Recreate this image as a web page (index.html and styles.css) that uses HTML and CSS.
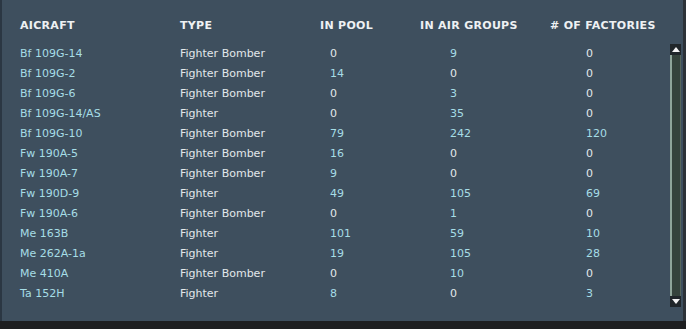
FILE: index.html
```html
<!DOCTYPE html>
<html>
<head>
<meta charset="utf-8">
<link rel="stylesheet" href="styles.css">
</head>
<body>
<div class="screen">
  <div class="panel">
    <div class="table">
      <div class="row head">
        <div class="c name">AICRAFT</div>
        <div class="c type">TYPE</div>
        <div class="c pool">IN POOL</div>
        <div class="c air">IN AIR GROUPS</div>
        <div class="c fac"># OF FACTORIES</div>
      </div>
      <div class="row"><div class="c name">Bf 109G-14</div><div class="c type">Fighter Bomber</div><div class="c pool n z">0</div><div class="c air n">9</div><div class="c fac n z">0</div></div>
      <div class="row"><div class="c name">Bf 109G-2</div><div class="c type">Fighter Bomber</div><div class="c pool n">14</div><div class="c air n z">0</div><div class="c fac n z">0</div></div>
      <div class="row"><div class="c name">Bf 109G-6</div><div class="c type">Fighter Bomber</div><div class="c pool n z">0</div><div class="c air n">3</div><div class="c fac n z">0</div></div>
      <div class="row"><div class="c name">Bf 109G-14/AS</div><div class="c type">Fighter</div><div class="c pool n z">0</div><div class="c air n">35</div><div class="c fac n z">0</div></div>
      <div class="row"><div class="c name">Bf 109G-10</div><div class="c type">Fighter Bomber</div><div class="c pool n">79</div><div class="c air n">242</div><div class="c fac n">120</div></div>
      <div class="row"><div class="c name">Fw 190A-5</div><div class="c type">Fighter Bomber</div><div class="c pool n">16</div><div class="c air n z">0</div><div class="c fac n z">0</div></div>
      <div class="row"><div class="c name">Fw 190A-7</div><div class="c type">Fighter Bomber</div><div class="c pool n">9</div><div class="c air n z">0</div><div class="c fac n z">0</div></div>
      <div class="row"><div class="c name">Fw 190D-9</div><div class="c type">Fighter</div><div class="c pool n">49</div><div class="c air n">105</div><div class="c fac n">69</div></div>
      <div class="row"><div class="c name">Fw 190A-6</div><div class="c type">Fighter Bomber</div><div class="c pool n z">0</div><div class="c air n">1</div><div class="c fac n z">0</div></div>
      <div class="row"><div class="c name">Me 163B</div><div class="c type">Fighter</div><div class="c pool n">101</div><div class="c air n">59</div><div class="c fac n">10</div></div>
      <div class="row"><div class="c name">Me 262A-1a</div><div class="c type">Fighter</div><div class="c pool n">19</div><div class="c air n">105</div><div class="c fac n">28</div></div>
      <div class="row"><div class="c name">Me 410A</div><div class="c type">Fighter Bomber</div><div class="c pool n z">0</div><div class="c air n">10</div><div class="c fac n z">0</div></div>
      <div class="row"><div class="c name">Ta 152H</div><div class="c type">Fighter</div><div class="c pool n">8</div><div class="c air n z">0</div><div class="c fac n">3</div></div>
    </div>
    <div class="scroll">
      <div class="btn up"><span class="tri tri-up"></span></div>
      <div class="track"></div>
      <div class="btn down"><span class="tri tri-down"></span></div>
    </div>
  </div>
  <div class="bottom"></div>
</div>
</body>
</html>
```
FILE: styles.css
```css
html, body {
  margin: 0;
  padding: 0;
  background: #1e1f21;
}
.screen {
  width: 686px;
  height: 329px;
  display: flex;
  flex-direction: column;
  font-family: "DejaVu Sans", Verdana, sans-serif;
}
.panel {
  height: 321px;
  display: flex;
  background: #3e4f5e;
  border-left: 2px solid #2b3743;
  border-right: 3px solid #2c3238;
  box-sizing: border-box;
}
.table {
  flex: 1;
  padding: 18px 0 0 18px;
}
.row {
  display: grid;
  grid-template-columns: 160px 140px 100px 130px 1fr;
  height: 20px;
  line-height: 20px;
  font-size: 11px;
  white-space: nowrap;
}
.row.head {
  height: 16px;
  line-height: 16px;
  margin-bottom: 10px;
  font-weight: bold;
  font-size: 11px;
  letter-spacing: 0.3px;
  color: #eef1f3;
}
.c.name { color: #a6dde6; }
.c.type { color: #e2e7ea; }
.head .c { color: #eef1f3; }
.n { color: #a6dde6; }
.n.z { color: #e2e7ea; }
.pool.n { padding-left: 10px; }
.air.n { padding-left: 30px; }
.fac.n { padding-left: 36px; }
.scroll {
  width: 11px;
  margin: 44px 2px 0 0;
  height: 263px;
  display: flex;
  flex-direction: column;
}
.btn {
  height: 11px;
  background: #20262a;
  display: flex;
  align-items: center;
  justify-content: center;
}
.track {
  flex: 1;
  background: #35433c;
  border-left: 2px solid #8fa59a;
  border-right: 1px solid #56665c;
}
.tri {
  width: 0;
  height: 0;
  border-left: 4px solid transparent;
  border-right: 4px solid transparent;
}
.tri-up { border-bottom: 5px solid #f4f4f4; }
.tri-down { border-top: 5px solid #f4f4f4; }
.bottom {
  height: 8px;
  background: #1e1f21;
}
```
